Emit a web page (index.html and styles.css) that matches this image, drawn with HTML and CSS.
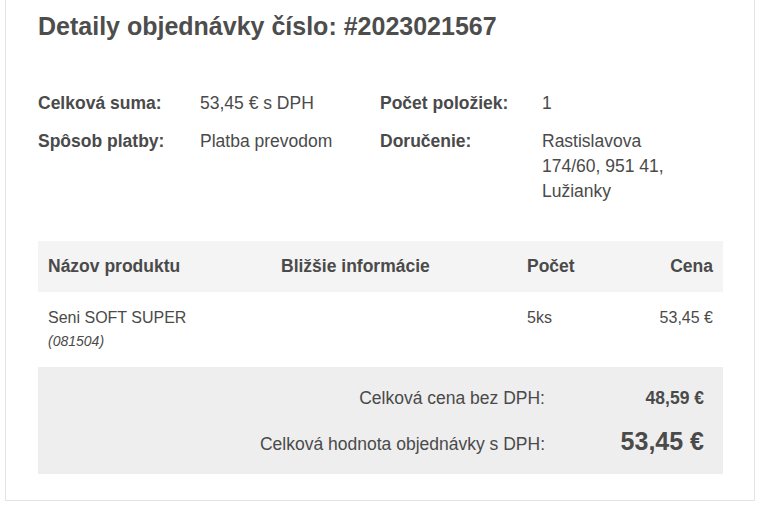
FILE: index.html
```html
<!DOCTYPE html>
<html lang="sk">
<head>
<meta charset="utf-8">
<title>Detaily objednávky</title>
<link rel="stylesheet" href="styles.css">
</head>
<body>
<div class="card">
  <h1 class="title">Detaily objednávky číslo: #2023021567</h1>

  <div class="info">
    <div class="label">Celková suma:</div>
    <div class="value">53,45 € s DPH</div>
    <div class="label">Počet položiek:</div>
    <div class="value">1</div>

    <div class="label">Spôsob platby:</div>
    <div class="value">Platba prevodom</div>
    <div class="label">Doručenie:</div>
    <div class="value">Rastislavova<br>174/60, 951 41,<br>Lužianky</div>
  </div>

  <table class="items">
    <thead>
      <tr>
        <th class="c-name">Názov produktu</th>
        <th class="c-info">Bližšie informácie</th>
        <th class="c-qty">Počet</th>
        <th class="c-price">Cena</th>
      </tr>
    </thead>
    <tbody>
      <tr>
        <td class="c-name">Seni SOFT SUPER<div class="code">(081504)</div></td>
        <td class="c-info"></td>
        <td class="c-qty">5ks</td>
        <td class="c-price">53,45 €</td>
      </tr>
    </tbody>
  </table>

  <div class="totals">
    <div class="t-row">
      <div class="t-label">Celková cena bez DPH:</div>
      <div class="t-value">48,59 €</div>
    </div>
    <div class="t-row big">
      <div class="t-label">Celková hodnota objednávky s DPH:</div>
      <div class="t-value">53,45 €</div>
    </div>
  </div>
</div>
</body>
</html>
```
FILE: styles.css
```css
* { box-sizing: border-box; }
html, body { margin: 0; padding: 0; background: #fff; }
body {
  font-family: "Liberation Sans", Arial, sans-serif;
  color: #4a4a4a;
  padding: 0 13px 0 5px;
}
.card {
  width: 750px;
  border: 1px solid #e4e4e4;
  border-top: none;
  padding: 11px 31px 26px 32px;
}
.title {
  margin: 0 0 50px;
  font-size: 25px;
  line-height: 30px;
  font-weight: bold;
  color: #4d4d4d;
}
.info {
  display: grid;
  grid-template-columns: 162px 180px 162px 1fr;
  row-gap: 13px;
  font-size: 17.5px;
  line-height: 25px;
  margin-bottom: 37px;
}
.info .label { font-weight: bold; }
.items {
  width: 100%;
  border-collapse: collapse;
  table-layout: fixed;
  font-size: 16px;
  line-height: 25px;
}
.items th {
  background: #f4f4f4;
  font-weight: bold;
  font-size: 17.5px;
  text-align: left;
  padding: 13px 10px;
}
.items td {
  vertical-align: top;
  padding: 13px 10px 15px;
}
.c-name { width: 233px; }
.c-info { width: 246px; }
.c-qty { width: 100px; }
.items .c-price { text-align: right; }
.code {
  font-size: 14px;
  line-height: 22px;
  font-style: italic;
}
.totals {
  background: #eeeeee;
  padding: 19px 19px 15px;
  display: flex;
  flex-direction: column;
  gap: 12px;
  font-size: 17.5px;
}
.t-row {
  display: flex;
  align-items: baseline;
  line-height: 25px;
}
.t-label {
  flex: 1;
  text-align: right;
}
.t-value {
  width: 159px;
  text-align: right;
  font-weight: bold;
}
.t-row.big .t-value {
  font-size: 25px;
  line-height: 36px;
}
```
